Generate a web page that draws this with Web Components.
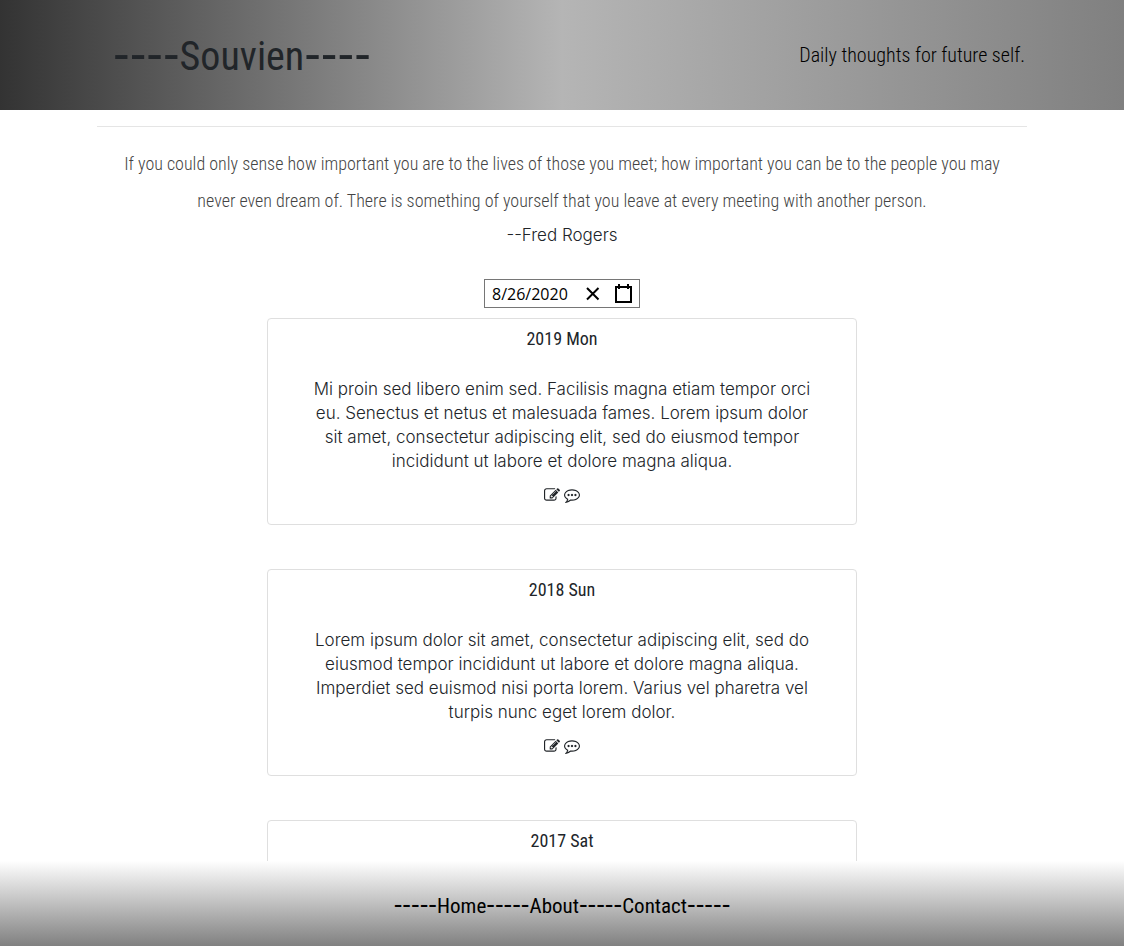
<!DOCTYPE html>
<html lang="en">
<head>
<meta charset="utf-8">
<meta name="viewport" content="width=device-width, initial-scale=1">
<title>Souvien</title>
<style>
  :root {
    --hand: "Roboto Condensed", "Liberation Sans Narrow", sans-serif;
    --dash: "Liberation Sans", sans-serif;
    --ink: #212529;
    --rule: #dfdfdf;
  }
  body { margin: 0; font: 300 17px/24px Inter, "Open Sans", sans-serif; color: var(--ink); background: #fff; }
</style>
</head>
<body>
<souvien-app></souvien-app>

<script>
class BaseElement extends HTMLElement {
  constructor() {
    super();
    const template = document.createElement('template');
    template.innerHTML = this.constructor.markup;
    this.attachShadow({ mode: 'open' }).append(template.content.cloneNode(true));
  }
}

customElements.define('site-header', class extends BaseElement {
  static markup = `
    <style>
      :host { display: block; background: linear-gradient(to right, #333 0%, #b5b5b5 50%, #808080 100%); }
      header { box-sizing: border-box; max-width: 930px; min-height: 110px; margin: 0 auto; padding: 0 2px 0 16px;
        display: flex; align-items: center; justify-content: space-between; font-family: var(--hand); }
      h1 { margin: 0; font-size: 40px; line-height: 64px; font-weight: 400; }
      h1 span { font-family: var(--dash); font-size: 50px; }
      p { margin: 0; font-size: 20px; line-height: 28px; font-weight: 300; color: #000; }
    </style>
    <header><h1><span>----</span><slot></slot><span>----</span></h1><p><slot name="tagline"></slot></p></header>`;
});

customElements.define('daily-quote', class extends BaseElement {
  static markup = `
    <style>
      :host { display: block; text-align: center; }
      figure { max-width: 930px; margin: 16px auto 0; padding-top: 18px; border-top: 1px solid #e5e5e5; }
      blockquote { max-width: 890px; margin: 0 auto; font: 300 18px/37px var(--hand); color: #444; }
      figcaption { margin-top: 4px; font-size: 17px; line-height: 24px; }
    </style>
    <figure><blockquote><slot></slot></blockquote><figcaption><slot name="author"></slot></figcaption></figure>`;
});

customElements.define('date-picker', class extends BaseElement {
  static markup = `
    <style>
      :host { display: flex; justify-content: center; }
      .field { box-sizing: border-box; display: flex; align-items: center; width: 156px; height: 29px;
        padding: 0 6px 0 7px; border: 1px solid #767676; }
      input { flex: 1; min-width: 0; padding: 0; border: 0; outline: 0; background: none; color: #000;
        font: 400 16px/24px "Open Sans", sans-serif; }
      button { display: flex; padding: 0; border: 0; background: none; color: #000; }
      button + button { margin-left: 14px; }
    </style>
    <div class="field">
      <input type="text" value="8/26/2020" aria-label="Date">
      <button type="button" aria-label="Clear date">
        <svg width="14" height="14" viewBox="0 0 14 14" fill="none" stroke="currentColor" stroke-width="2"><path d="M1 1 12.500 12.500M12.500 1 1 12.500"/></svg>
      </button>
      <button type="button" aria-label="Open calendar">
        <svg width="19" height="20" viewBox="0 0 19 20"><path fill="currentColor" fill-rule="evenodd" d="M1 2h3V0h2v2h7V0h2v2h3v17H1zM3 4v13h13V4h-1v1h-2V4H6v1H4V4z"/></svg>
      </button>
    </div>`;
});

customElements.define('thought-card', class extends BaseElement {
  static markup = `
    <style>
      :host { display: block; box-sizing: border-box; max-width: 590px; margin: 0 auto; border: 1px solid var(--rule);
        border-radius: 4px; text-align: center; background: #fff; }
      h2 { margin: 0; font: 400 18px/40px var(--hand); }
      .body { padding: 18px 40px 17px; }
      p { margin: 0; }
      .actions { display: flex; align-items: center; justify-content: center; gap: 4px; height: 24px; margin-top: 10px; }
      button { display: flex; padding: 0; border: 0; background: none; color: #212529; }
    </style>
    <article>
      <h2><slot name="title"></slot></h2>
      <div class="body">
        <p><slot></slot></p>
        <div class="actions">
          <button type="button" aria-label="Edit">
            <svg width="16" height="16" viewBox="0 0 1792 1792" fill="currentColor"><path d="M888 1184l116-116-152-152-116 116v56h96v96h56zm440-720q-16-16-33 1l-350 350q-17 17-1 33t33-1l350-350q17-17 1-33zm80 594v190q0 119-84.500 203.500t-203.500 84.500h-832q-119 0-203.500-84.500t-84.500-203.500v-832q0-119 84.500-203.500t203.500-84.500h832q63 0 117 25 15 7 18 23 3 17-9 29l-49 49q-14 14-32 8-23-6-45-6h-832q-66 0-113 47t-47 113v832q0 66 47 113t113 47h832q66 0 113-47t47-113v-126q0-13 9-22l64-64q15-15 35-7t20 29zm-96-738l288 288-672 672h-288v-288zm444 132l-92 92-288-288 92-92q28-28 68-28t68 28l152 152q28 28 28 68t-28 68z"/></svg>
          </button>
          <button type="button" aria-label="Comment">
            <svg width="16" height="16" viewBox="0 0 1792 1792" fill="currentColor"><path d="M640 896q0 53-37.500 90.500t-90.500 37.500-90.500-37.500-37.500-90.500 37.500-90.500 90.500-37.500 90.500 37.500 37.500 90.500zm384 0q0 53-37.500 90.500t-90.500 37.500-90.500-37.500-37.500-90.500 37.500-90.500 90.500-37.500 90.500 37.500 37.500 90.500zm384 0q0 53-37.500 90.500t-90.500 37.500-90.500-37.500-37.500-90.500 37.500-90.500 90.500-37.500 90.500 37.500 37.500 90.500zm-512-512q-204 0-381.500 69.500t-282 187.500-104.500 255q0 112 71.500 213.500t201.500 175.500l87 50-27 96q-24 91-70 172 152-63 275-171l43-38 57 6q69 8 130 8 204 0 381.500-69.500t282-187.500 104.500-255-104.500-255-282-187.500-381.500-69.500zm896 512q0 174-120 321.500t-326 233-450 85.500q-70 0-145-8-198 175-460 242-49 14-114 22h-5q-15 0-27-10.500t-16-27.500v-1q-3-4-.5-12t2-10 4.500-9.500l6-9 7-8.500 8-9q7-8 31-34.500t34.500-38 31-39.500 32.500-51 27-59 26-76q-157-89-247.500-220t-90.500-281q0-174 120-321.500t326-233 450-85.500 450 85.500 326 233 120 321.500z"/></svg>
          </button>
        </div>
      </div>
    </article>`;
});

customElements.define('site-footer', class extends BaseElement {
  static markup = `
    <style>
      :host { display: block; background: linear-gradient(#fff, #808080); }
      nav { box-sizing: border-box; min-height: 85px; padding-top: 2px; display: flex; align-items: center; justify-content: center; color: #000; }
      div { display: flex; align-items: baseline; font: 400 21px/36px var(--hand); white-space: nowrap; }
      span { font-family: var(--dash); font-size: 26px; }
      a { color: inherit; text-decoration: none; }
    </style>
    <nav><div><span>-----</span><a href="#home">Home</a><span>-----</span><a href="#about">About</a><span>-----</span><a href="#contact">Contact</a><span>-----</span></div></nav>`;
});

customElements.define('souvien-app', class extends BaseElement {
  static markup = `
    <style>
      :host { display: flex; flex-direction: column; height: 100vh; }
      site-header, site-footer { flex: none; }
      main { flex: 1; min-height: 0; overflow-y: auto; scrollbar-width: none; }
      date-picker { margin: 32px 0 10px; }
      .cards { display: flex; flex-direction: column; gap: 44px; }
      thought-card { width: 100%; }
    </style>
    <site-header>Souvien<span slot="tagline">Daily thoughts for future self.</span></site-header>
    <main>
      <daily-quote>If you could only sense how important you are to the lives of those you meet; how important you can be to the people you may never even dream of. There is something of yourself that you leave at every meeting with another person.<span slot="author">--Fred Rogers</span></daily-quote>
      <date-picker></date-picker>
      <div class="cards">
        <thought-card><span slot="title">2019 Mon</span>Mi proin sed libero enim sed. Facilisis magna etiam tempor orci eu. Senectus et netus et malesuada fames. Lorem ipsum dolor sit amet, consectetur adipiscing elit, sed do eiusmod tempor incididunt ut labore et dolore magna aliqua.</thought-card>
        <thought-card><span slot="title">2018 Sun</span>Lorem ipsum dolor sit amet, consectetur adipiscing elit, sed do eiusmod tempor incididunt ut labore et dolore magna aliqua. Imperdiet sed euismod nisi porta lorem. Varius vel pharetra vel turpis nunc eget lorem dolor.</thought-card>
        <thought-card><span slot="title">2017 Sat</span></thought-card>
      </div>
    </main>
    <site-footer></site-footer>`;
});
</script>
</body>
</html>
